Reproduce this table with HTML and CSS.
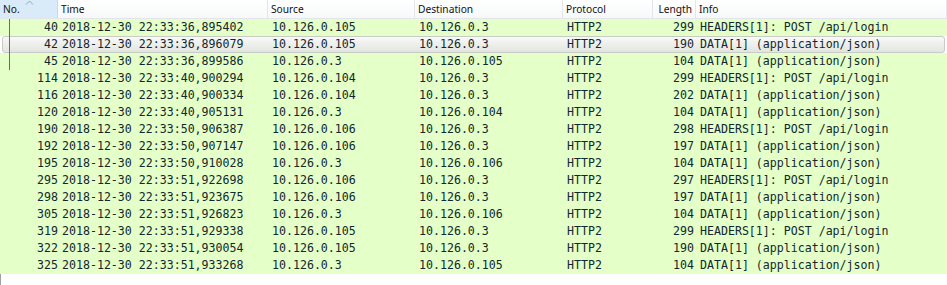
FILE: index.html
```html
<!DOCTYPE html>
<html lang="en">
<head>
  <meta charset="UTF-8">
  <title>Packet list</title>
  <link rel="stylesheet" href="styles.css">
</head>
<body>
  <div id="packets">
    <div class="head">
      <div class="col sorted">No.
        <svg class="arrow" width="9" height="5" viewBox="0 0 9 5"><path d="M1 4.5 L4.5 1 L8 4.5" fill="none" stroke="#8fa8c8" stroke-width="1"/></svg>
      </div>
      <div class="col">Time</div>
      <div class="col">Source</div>
      <div class="col">Destination</div>
      <div class="col">Protocol</div>
      <div class="col num">Length</div>
      <div class="col">Info</div>
    </div>
    <div class="list">
      <div class="related"></div>
      <div class="row"><span class="num">40</span><span>2018-12-30 22:33:36,895402</span><span>10.126.0.105</span><span>10.126.0.3</span><span>HTTP2</span><span class="num">299</span><span>HEADERS[1]: POST /api/login</span></div>
      <div class="row selected"><span class="num">42</span><span>2018-12-30 22:33:36,896079</span><span>10.126.0.105</span><span>10.126.0.3</span><span>HTTP2</span><span class="num">190</span><span>DATA[1] (application/json)</span></div>
      <div class="row"><span class="num">45</span><span>2018-12-30 22:33:36,899586</span><span>10.126.0.3</span><span>10.126.0.105</span><span>HTTP2</span><span class="num">104</span><span>DATA[1] (application/json)</span></div>
      <div class="row"><span class="num">114</span><span>2018-12-30 22:33:40,900294</span><span>10.126.0.104</span><span>10.126.0.3</span><span>HTTP2</span><span class="num">299</span><span>HEADERS[1]: POST /api/login</span></div>
      <div class="row"><span class="num">116</span><span>2018-12-30 22:33:40,900334</span><span>10.126.0.104</span><span>10.126.0.3</span><span>HTTP2</span><span class="num">202</span><span>DATA[1] (application/json)</span></div>
      <div class="row"><span class="num">120</span><span>2018-12-30 22:33:40,905131</span><span>10.126.0.3</span><span>10.126.0.104</span><span>HTTP2</span><span class="num">104</span><span>DATA[1] (application/json)</span></div>
      <div class="row"><span class="num">190</span><span>2018-12-30 22:33:50,906387</span><span>10.126.0.106</span><span>10.126.0.3</span><span>HTTP2</span><span class="num">298</span><span>HEADERS[1]: POST /api/login</span></div>
      <div class="row"><span class="num">192</span><span>2018-12-30 22:33:50,907147</span><span>10.126.0.106</span><span>10.126.0.3</span><span>HTTP2</span><span class="num">197</span><span>DATA[1] (application/json)</span></div>
      <div class="row"><span class="num">195</span><span>2018-12-30 22:33:50,910028</span><span>10.126.0.3</span><span>10.126.0.106</span><span>HTTP2</span><span class="num">104</span><span>DATA[1] (application/json)</span></div>
      <div class="row"><span class="num">295</span><span>2018-12-30 22:33:51,922698</span><span>10.126.0.106</span><span>10.126.0.3</span><span>HTTP2</span><span class="num">297</span><span>HEADERS[1]: POST /api/login</span></div>
      <div class="row"><span class="num">298</span><span>2018-12-30 22:33:51,923675</span><span>10.126.0.106</span><span>10.126.0.3</span><span>HTTP2</span><span class="num">197</span><span>DATA[1] (application/json)</span></div>
      <div class="row"><span class="num">305</span><span>2018-12-30 22:33:51,926823</span><span>10.126.0.3</span><span>10.126.0.106</span><span>HTTP2</span><span class="num">104</span><span>DATA[1] (application/json)</span></div>
      <div class="row"><span class="num">319</span><span>2018-12-30 22:33:51,929338</span><span>10.126.0.105</span><span>10.126.0.3</span><span>HTTP2</span><span class="num">299</span><span>HEADERS[1]: POST /api/login</span></div>
      <div class="row"><span class="num">322</span><span>2018-12-30 22:33:51,930054</span><span>10.126.0.105</span><span>10.126.0.3</span><span>HTTP2</span><span class="num">190</span><span>DATA[1] (application/json)</span></div>
      <div class="row"><span class="num">325</span><span>2018-12-30 22:33:51,933268</span><span>10.126.0.3</span><span>10.126.0.105</span><span>HTTP2</span><span class="num">104</span><span>DATA[1] (application/json)</span></div>
    </div>
  </div>
</body>
</html>
```

FILE: styles.css
```css
body {
  margin: 0;
  background: #fff;
}
#packets {
  width: 947px;
  height: 285px;
  overflow: hidden;
}
#packets .head,
#packets .row {
  display: grid;
  grid-template-columns: 58px 210px 147px 148px 90px 43px 1fr;
}
.head {
  height: 18px;
  background: linear-gradient(#fff, #f7f8f9);
  border-bottom: 1px solid #e3e5e8;
  font-family: 'Noto Sans', sans-serif;
  font-size: 10.2px;
  color: #111;
}
.head .col {
  position: relative;
  padding: 0 3px;
  line-height: 18px;
  border-right: 1px solid #e3e5e8;
  white-space: nowrap;
  overflow: hidden;
}
.head .col.num { text-align: right; }
.head .col.sorted {
  background: #d9ebf9;
  border-right-color: #bcdcf4;
}
.head .arrow {
  position: absolute;
  left: 25px;
  top: 0;
}
.list {
  position: relative;
  height: 266px;
  border-left: 1px solid #a0a0a0;
}
.row {
  position: relative;
  height: 17px;
  background: #e4ffc7;
  color: #12272e;
  font-family: 'DejaVu Sans Mono', monospace;
  font-size: 11.6px;
  line-height: 17px;
  margin-left: -1px;
  padding-left: 1px;
}
.row span {
  position: relative;
  padding-left: 3px;
  white-space: nowrap;
  overflow: hidden;
}
.row span.num {
  text-align: right;
  padding: 0 3px 0 0;
}
.row span:first-child.num { padding-right: 1px; }
.row.selected { background: #fff; }
.row.selected:before {
  content: '';
  position: absolute;
  top: 0;
  bottom: 0;
  left: 2px;
  right: 2px;
  background: linear-gradient(#f9f9f9, #e2e5df);
  border: 1px solid #c9ccc6;
  border-radius: 3px;
}
.related {
  position: absolute;
  left: 8px;
  top: 0;
  width: 1px;
  height: 51px;
  background: #6b6b6b;
  z-index: 2;
}
```
